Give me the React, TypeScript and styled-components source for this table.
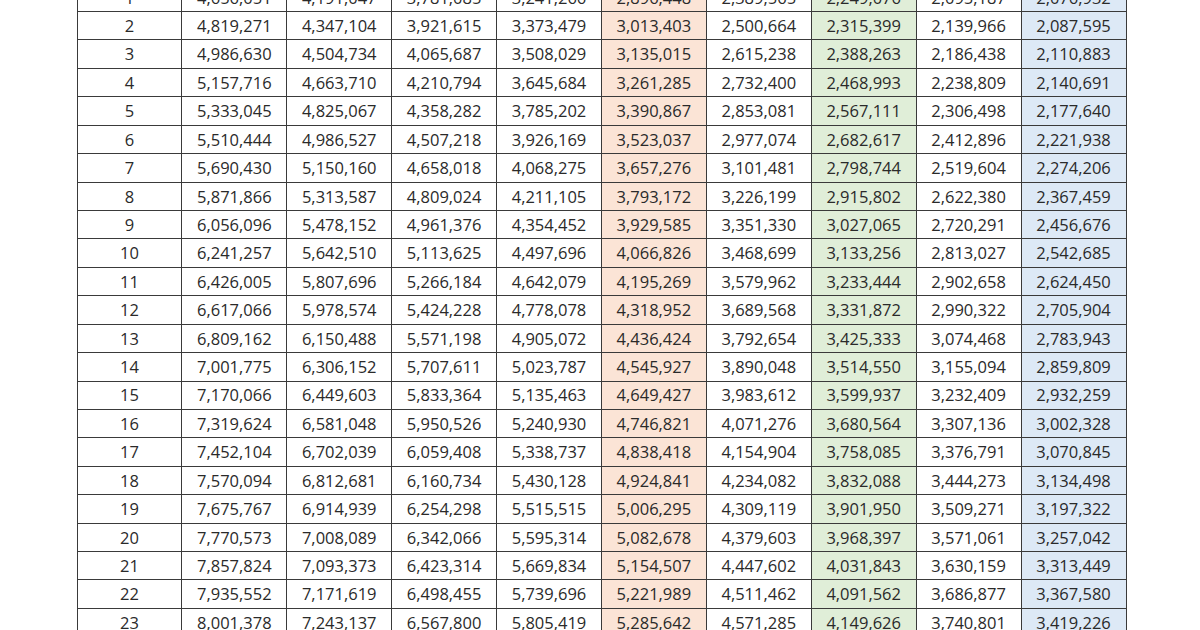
import styled, { createGlobalStyle } from 'styled-components';

const GlobalStyle = createGlobalStyle`
  html, body {
    margin: 0;
    padding: 0;
    background: #ffffff;
    overflow: hidden;
  }
`;

const rows: string[][] = [
  ['4,656,051', '4,191,047', '3,781,085', '3,241,266', '2,896,448', '2,389,565', '2,249,076', '2,095,187', '2,076,932'],
  ['4,819,271', '4,347,104', '3,921,615', '3,373,479', '3,013,403', '2,500,664', '2,315,399', '2,139,966', '2,087,595'],
  ['4,986,630', '4,504,734', '4,065,687', '3,508,029', '3,135,015', '2,615,238', '2,388,263', '2,186,438', '2,110,883'],
  ['5,157,716', '4,663,710', '4,210,794', '3,645,684', '3,261,285', '2,732,400', '2,468,993', '2,238,809', '2,140,691'],
  ['5,333,045', '4,825,067', '4,358,282', '3,785,202', '3,390,867', '2,853,081', '2,567,111', '2,306,498', '2,177,640'],
  ['5,510,444', '4,986,527', '4,507,218', '3,926,169', '3,523,037', '2,977,074', '2,682,617', '2,412,896', '2,221,938'],
  ['5,690,430', '5,150,160', '4,658,018', '4,068,275', '3,657,276', '3,101,481', '2,798,744', '2,519,604', '2,274,206'],
  ['5,871,866', '5,313,587', '4,809,024', '4,211,105', '3,793,172', '3,226,199', '2,915,802', '2,622,380', '2,367,459'],
  ['6,056,096', '5,478,152', '4,961,376', '4,354,452', '3,929,585', '3,351,330', '3,027,065', '2,720,291', '2,456,676'],
  ['6,241,257', '5,642,510', '5,113,625', '4,497,696', '4,066,826', '3,468,699', '3,133,256', '2,813,027', '2,542,685'],
  ['6,426,005', '5,807,696', '5,266,184', '4,642,079', '4,195,269', '3,579,962', '3,233,444', '2,902,658', '2,624,450'],
  ['6,617,066', '5,978,574', '5,424,228', '4,778,078', '4,318,952', '3,689,568', '3,331,872', '2,990,322', '2,705,904'],
  ['6,809,162', '6,150,488', '5,571,198', '4,905,072', '4,436,424', '3,792,654', '3,425,333', '3,074,468', '2,783,943'],
  ['7,001,775', '6,306,152', '5,707,611', '5,023,787', '4,545,927', '3,890,048', '3,514,550', '3,155,094', '2,859,809'],
  ['7,170,066', '6,449,603', '5,833,364', '5,135,463', '4,649,427', '3,983,612', '3,599,937', '3,232,409', '2,932,259'],
  ['7,319,624', '6,581,048', '5,950,526', '5,240,930', '4,746,821', '4,071,276', '3,680,564', '3,307,136', '3,002,328'],
  ['7,452,104', '6,702,039', '6,059,408', '5,338,737', '4,838,418', '4,154,904', '3,758,085', '3,376,791', '3,070,845'],
  ['7,570,094', '6,812,681', '6,160,734', '5,430,128', '4,924,841', '4,234,082', '3,832,088', '3,444,273', '3,134,498'],
  ['7,675,767', '6,914,939', '6,254,298', '5,515,515', '5,006,295', '4,309,119', '3,901,950', '3,509,271', '3,197,322'],
  ['7,770,573', '7,008,089', '6,342,066', '5,595,314', '5,082,678', '4,379,603', '3,968,397', '3,571,061', '3,257,042'],
  ['7,857,824', '7,093,373', '6,423,314', '5,669,834', '5,154,507', '4,447,602', '4,031,843', '3,630,159', '3,313,449'],
  ['7,935,552', '7,171,619', '6,498,455', '5,739,696', '5,221,989', '4,511,462', '4,091,562', '3,686,877', '3,367,580'],
  ['8,001,378', '7,243,137', '6,567,800', '5,805,419', '5,285,642', '4,571,285', '4,149,626', '3,740,801', '3,419,226'],
];

type Tint = 'none' | 'orange' | 'green' | 'blue';

const tintColors: Record<Tint, string> = {
  none: '#ffffff',
  orange: '#fbe4d6',
  green: '#e0eed8',
  blue: '#dde9f6',
};

const tintFor = (col: number): Tint => {
  if (col === 4) return 'orange';
  if (col === 6) return 'green';
  if (col === 8) return 'blue';
  return 'none';
};

const Page = styled.div`
  width: 1200px;
  height: 630px;
  overflow: hidden;
  padding-left: 76.5px;
  box-sizing: border-box;
`;

const Sheet = styled.table`
  margin-top: -17.4px;
  border-collapse: collapse;
  table-layout: fixed;
  width: 1050px;
  font-family: 'Open Sans', 'Noto Sans', sans-serif;
  font-size: 16.5px;
  color: #2a2a2a;
`;

const Row = styled.tr`
  height: 28.43px;
`;

const Cell = styled.td<{ $tint: Tint }>`
  padding: 1px 0 0;
  text-align: center;
  line-height: 1;
  border: 1px solid #3a3a3a;
  background: ${(p) => tintColors[p.$tint]};
  white-space: nowrap;
`;

export default function App() {
  return (
    <>
      <GlobalStyle />
      <Page>
        <Sheet>
          <tbody>
            {rows.map((values, i) => (
              <Row key={i}>
                <Cell $tint="none">{i + 1}</Cell>
                {values.map((v, c) => (
                  <Cell key={c} $tint={tintFor(c)}>
                    {v}
                  </Cell>
                ))}
              </Row>
            ))}
          </tbody>
        </Sheet>
      </Page>
    </>
  );
}
